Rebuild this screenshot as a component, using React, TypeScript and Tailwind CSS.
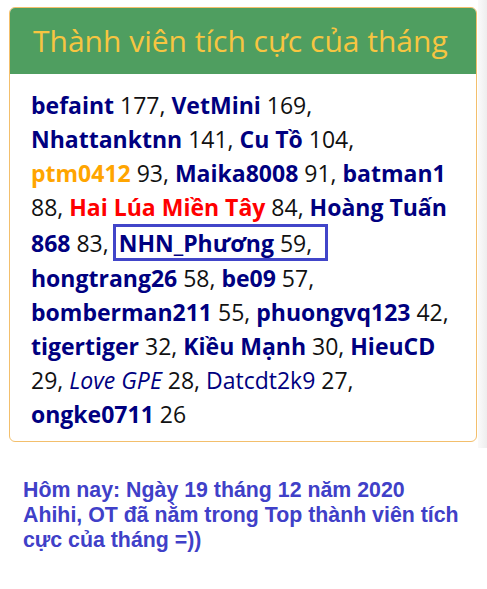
import React from "react";

const N = ({ children, c = "text-[#000080]" }: { children: React.ReactNode; c?: string }) => (
  <b className={`font-bold ${c}`}>{children}</b>
);

export default function App() {
  return (
    <div className="w-[487px] h-[589px] bg-white relative overflow-hidden">
      <div className="flex">
        <div className="w-[478px] h-[448px] pt-[7px] pl-[9px] pr-[1px]">
          <div className="w-[468px] border border-[#f3bf6c] rounded-[6px] overflow-hidden bg-white">
            <div className="bg-[#4f9e60] h-[66px] flex items-center pl-[23px]">
              <span className="text-[#f7c541] text-[30px] leading-none" style={{ fontFamily: '"Open Sans", sans-serif' }}>
                Thành viên tích cực của tháng
              </span>
            </div>
            <div
              className="pl-[21px] pt-[14px] pb-[10px] text-[23px] leading-[34px] text-[#111]"
              style={{ fontFamily: '"Open Sans", sans-serif' }}
            >
              <div><N>befaint</N> 177, <N>VetMini</N> 169,</div>
              <div><N>Nhattanktnn</N> 141, <N>Cu Tồ</N> 104,</div>
              <div><N c="text-[#ffa500]">ptm0412</N> 93, <N>Maika8008</N> 91, <N>batman1</N></div>
              <div>88, <N c="text-[#ff0000]">Hai Lúa Miền Tây</N> 84, <N>Hoàng Tuấn</N></div>
              <div className="flex items-center">
                <span className="whitespace-nowrap"><N>868</N> 83,</span>
                <span className="ml-[4px] border-[3px] border-[#4145c9] h-[37px] w-[215px] flex items-center pl-[3px] whitespace-nowrap">
                  <N>NHN_Phương</N>&nbsp;59,
                </span>
              </div>
              <div><N>hongtrang26</N> 58, <N>be09</N> 57,</div>
              <div><N>bomberman211</N> 55, <N>phuongvq123</N> 42,</div>
              <div><N>tigertiger</N> 32, <N>Kiều Mạnh</N> 30, <N>HieuCD</N></div>
              <div>29, <i className="italic text-[#000080]">Love GPE</i> 28, <span className="text-[#000080]">Datcdt2k9</span> 27,</div>
              <div><N>ongke0711</N> 26</div>
            </div>
          </div>
        </div>
        <div className="w-[9px] h-[448px] bg-gradient-to-r from-[#fafafa] to-[#eeeeee]" />
      </div>
      <div
        className="mt-[30px] pl-[23px] text-[#4040c8] font-bold text-[21.33px] leading-[25px]"
        style={{ fontFamily: '"Liberation Sans", Arial, sans-serif' }}
      >
        <div>Hôm nay: Ngày 19 tháng 12 năm 2020</div>
        <div>Ahihi, OT đã nằm trong Top thành viên tích</div>
        <div>cực của tháng =))</div>
      </div>
    </div>
  );
}
